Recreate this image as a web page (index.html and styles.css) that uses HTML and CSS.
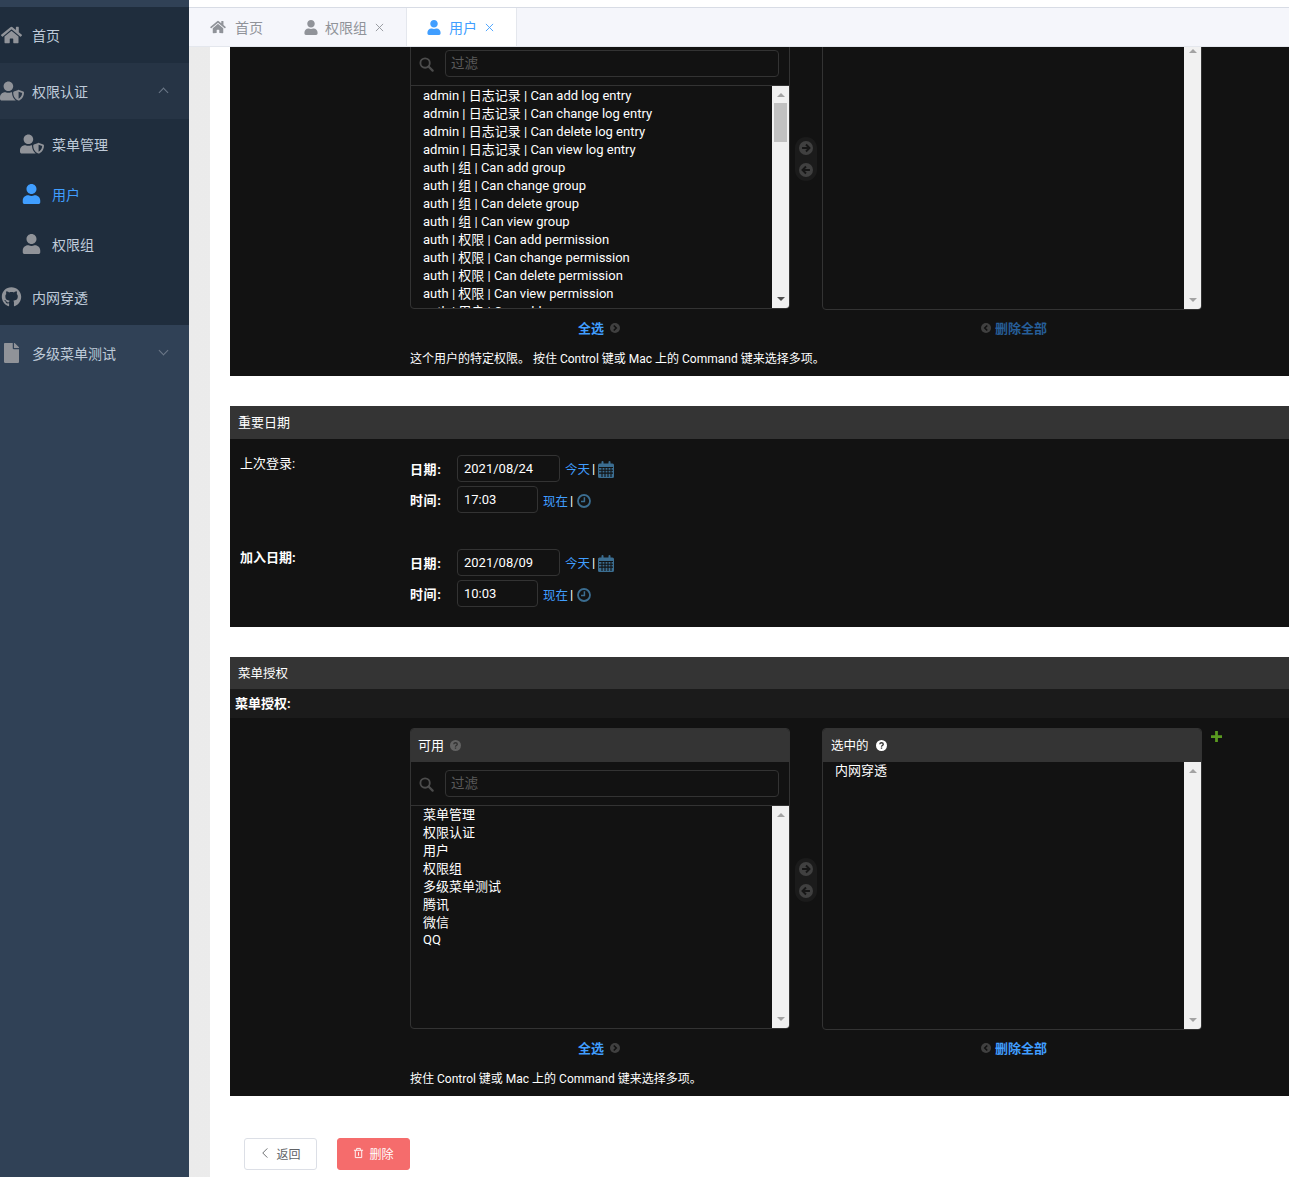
FILE: index.html
```html
<!DOCTYPE html>
<html lang="en">

<head>
    <title>用户</title>
    <meta charset="UTF-8">
    <meta name="viewport" content="width=device-width, initial-scale=1">
    <link rel="stylesheet" href="styles.css">
</head>

<body>
    <svg class="defs" aria-hidden="true">
        <symbol id="i-home" viewBox="0 0 576 512"><path d="M280.37 148.26L96 300.11V464a16 16 0 0 0 16 16l112.06-.29a16 16 0 0 0 15.92-16V368a16 16 0 0 1 16-16h64a16 16 0 0 1 16 16v95.64a16 16 0 0 0 16 16.05L464 480a16 16 0 0 0 16-16V300L295.67 148.26a12.19 12.19 0 0 0-15.3 0zM571.6 251.47L488 182.56V44.05a12 12 0 0 0-12-12h-56a12 12 0 0 0-12 12v72.61L318.47 43a48 48 0 0 0-61 0L4.34 251.47a12 12 0 0 0-1.6 16.9l25.5 31A12 12 0 0 0 45.15 301l235.22-193.74a12.19 12.19 0 0 1 15.3 0L530.9 301a12 12 0 0 0 16.9-1.6l25.5-31a12 12 0 0 0-1.7-16.93z"/></symbol>
        <symbol id="i-user" viewBox="0 0 448 512"><path d="M224 256c70.7 0 128-57.3 128-128S294.7 0 224 0 96 57.3 96 128s57.3 128 128 128zm89.6 32h-16.7c-22.2 10.2-46.9 16-72.9 16s-50.6-5.8-72.9-16h-16.7C60.2 288 0 348.2 0 422.4V464c0 26.5 21.5 48 48 48h352c26.5 0 48-21.5 48-48v-41.6c0-74.2-60.2-134.4-134.4-134.4z"/></symbol>
        <symbol id="i-shield" viewBox="0 0 640 512"><path d="M622.3 271.1l-115.2-45c-4.1-1.6-12.6-3.7-22.2 0l-115.2 45c-10.7 4.2-17.7 14-17.7 24.9 0 111.6 68.7 188.8 132.9 213.9 9.6 3.7 18 1.6 22.2 0C558.4 489.9 640 420.5 640 296c0-10.9-7-20.7-17.7-24.9zM496 462.4V273.3l95.5 37.3c-5.6 87.1-60.9 135.4-95.5 151.8zM224 256c70.7 0 128-57.3 128-128S294.7 0 224 0 96 57.3 96 128s57.3 128 128 128zm96 40c0-2.5.8-4.8 1.1-7.2-2.5-.1-4.9-.8-7.5-.8h-16.7c-22.2 10.2-46.9 16-72.9 16s-50.6-5.8-72.9-16h-16.7C60.2 288 0 348.2 0 422.4V464c0 26.5 21.5 48 48 48h352c6.8 0 13.3-1.5 19.2-4-54-42.9-99.2-116.7-99.2-212z"/></symbol>
        <symbol id="i-github" viewBox="0 0 496 512"><path d="M165.9 397.4c0 2-2.3 3.6-5.2 3.6-3.3 0-5.6-1.6-5.6-3.6 0-2 2.3-3.6 5.2-3.6 3-.3 5.6 1.3 5.6 3.6zm-31.1-4.5c-.7 2 1.3 4.3 4.3 4.9 2.6 1 5.6 0 6.2-2s-1.3-4.3-4.3-5.2c-2.6-.7-5.5.3-6.2 2.3zm44.2-1.7c-2.9.7-4.9 2.6-4.6 4.9.3 2 2.9 3.3 5.9 2.6 2.9-.7 4.9-2.6 4.6-4.6-.3-1.9-3-3.2-5.9-2.9zM244.8 8C106.1 8 0 113.3 0 252c0 110.9 69.8 205.8 169.5 239.2 12.8 2.3 17.3-5.6 17.3-12.1 0-6.2-.3-40.4-.3-61.4 0 0-70 15-84.7-29.8 0 0-11.4-29.1-27.8-36.6 0 0-22.9-15.7 1.6-15.4 0 0 24.9 2 38.6 25.8 21.9 38.6 58.6 27.5 72.9 20.9 2.3-16 8.8-27.1 16-33.7-55.9-6.2-112.3-14.3-112.3-110.5 0-27.5 7.6-41.3 23.6-58.9-2.6-6.5-11.1-33.3 2.6-67.9 20.9-6.5 69 27 69 27 20-5.6 41.5-8.5 62.8-8.5s42.8 2.9 62.8 8.5c0 0 48.1-33.6 69-27 13.7 34.7 5.2 61.4 2.6 67.9 16 17.7 25.8 31.5 25.8 58.9 0 96.5-58.9 104.2-114.8 110.5 9.2 7.9 17 22.9 17 46.4 0 33.7-.3 75.4-.3 83.6 0 6.5 4.6 14.4 17.3 12.1C428.2 457.8 496 362.9 496 252 496 113.3 383.5 8 244.8 8z"/></symbol>
        <symbol id="i-file" viewBox="0 0 384 512"><path d="M224 136V0H24C10.7 0 0 10.7 0 24v464c0 13.3 10.7 24 24 24h336c13.3 0 24-10.7 24-24V160H248c-13.2 0-24-10.8-24-24zm160-14.1v6.1H256V0h6.1c6.4 0 12.5 2.5 17 7l97.9 98c4.5 4.5 7 10.6 7 16.9z"/></symbol>
        <symbol id="i-search" viewBox="0 0 16 16"><circle cx="6.5" cy="6.5" r="5" fill="none" stroke="currentColor" stroke-width="2"/><path d="M10.2 10.2l4.3 4.3" stroke="currentColor" stroke-width="2.4" stroke-linecap="round"/></symbol>
        <symbol id="i-right" viewBox="0 0 16 16"><circle cx="8" cy="8" r="8" fill="currentColor"/><path d="M3.5 8h8M8 4l4 4-4 4" fill="none" stroke="#161616" stroke-width="2.2"/></symbol>
        <symbol id="i-left" viewBox="0 0 16 16"><circle cx="8" cy="8" r="8" fill="currentColor"/><path d="M12.5 8h-8M8 4L4 8l4 4" fill="none" stroke="#161616" stroke-width="2.2"/></symbol>
        <symbol id="i-more" viewBox="0 0 16 16"><circle cx="8" cy="8" r="8" fill="currentColor"/><path d="M6 4l4 4-4 4" fill="none" stroke="#121212" stroke-width="2.6"/></symbol>
        <symbol id="i-less" viewBox="0 0 16 16"><circle cx="8" cy="8" r="8" fill="currentColor"/><path d="M10 4L6 8l4 4" fill="none" stroke="#121212" stroke-width="2.6"/></symbol>
        <symbol id="i-help" viewBox="0 0 16 16"><circle cx="8" cy="8" r="8" fill="currentColor"/><path d="M5.4 6.2C5.6 4.6 6.7 4 8 4c1.500 0 2.600.9 2.600 2.200 0 1.900-2.600 1.800-2.600 3.500" fill="none" stroke="#333" stroke-width="1.900"/><path d="M7 10.800h2v2H7z" fill="#333"/></symbol>
        <symbol id="i-calendar" viewBox="0 0 16 17"><path fill="currentColor" d="M1.500 2.500H3.500V1a1 1 0 0 1 2 0v1.500h5V1a1 1 0 0 1 2 0v1.500h2a1.500 1.500 0 0 1 1.500 1.500v11.500a1.500 1.500 0 0 1-1.500 1.500h-13A1.500 1.500 0 0 1 0 15.500V4a1.500 1.500 0 0 1 1.500-1.500z"/><path stroke="#121212" stroke-width="1.100" fill="none" d="M1 6.500h14M1 9.300h14M1 12.100h14M4 6.500v9.500M7 6.500v9.500M10 6.500v9.500M13 6.500v9.500"/></symbol>
        <symbol id="i-clock" viewBox="0 0 14 14"><circle cx="7" cy="7" r="6" fill="none" stroke="currentColor" stroke-width="1.800"/><path d="M7.400 3.200v4.200H4" fill="none" stroke="currentColor" stroke-width="1.500"/></symbol>
    </svg>

    <div class="app">
        <aside class="sidebar">
            <nav class="menu">
                <a class="menu-item"><svg class="menu-icon"><use href="#i-home"/></svg>首页</a>
                <a class="menu-item menu-open"><svg class="menu-icon menu-icon-wide"><use href="#i-shield"/></svg>权限认证<span class="chevron chevron-up"></span></a>
                <a class="menu-item menu-sub"><svg class="menu-icon menu-icon-wide"><use href="#i-shield"/></svg>菜单管理</a>
                <a class="menu-item menu-sub menu-active"><svg class="menu-icon"><use href="#i-user"/></svg>用户</a>
                <a class="menu-item menu-sub"><svg class="menu-icon"><use href="#i-user"/></svg>权限组</a>
                <a class="menu-item"><svg class="menu-icon"><use href="#i-github"/></svg>内网穿透</a>
                <a class="menu-item menu-plain"><svg class="menu-icon"><use href="#i-file"/></svg>多级菜单测试<span class="chevron"></span></a>
            </nav>
        </aside>

        <main class="main">
            <div class="top-line"></div>
            <div class="tabs">
                <a class="tab"><svg class="tab-icon"><use href="#i-home"/></svg>首页</a>
                <a class="tab tab-closable"><svg class="tab-icon tab-icon-user"><use href="#i-user"/></svg>权限组<svg class="tab-close" viewBox="0 0 10 10"><path d="M1 1l8 8M9 1l-8 8"/></svg></a>
                <a class="tab tab-closable tab-active"><svg class="tab-icon tab-icon-user"><use href="#i-user"/></svg>用户<svg class="tab-close" viewBox="0 0 10 10"><path d="M1 1l8 8M9 1l-8 8"/></svg></a>
            </div>

            <div class="content">
                <div class="page">
                    <section class="panel panel-scrolled">
                        <div class="chooser">
                            <div class="box box-left">
                                <div class="box-title"></div>
                                <div class="filter">
                                    <svg class="filter-icon"><use href="#i-search"/></svg>
                                    <input class="filter-input" type="text" placeholder="过滤">
                                </div>
                                <div class="list">
                                    <div class="list-rows">
                                        <div>admin | 日志记录 | Can add log entry</div>
                                        <div>admin | 日志记录 | Can change log entry</div>
                                        <div>admin | 日志记录 | Can delete log entry</div>
                                        <div>admin | 日志记录 | Can view log entry</div>
                                        <div>auth | 组 | Can add group</div>
                                        <div>auth | 组 | Can change group</div>
                                        <div>auth | 组 | Can delete group</div>
                                        <div>auth | 组 | Can view group</div>
                                        <div>auth | 权限 | Can add permission</div>
                                        <div>auth | 权限 | Can change permission</div>
                                        <div>auth | 权限 | Can delete permission</div>
                                        <div>auth | 权限 | Can view permission</div>
                                        <div>auth | 用户 | Can add user</div>
                                    </div>
                                    <div class="scrollbar"><span class="arrow-up"></span><span class="thumb"></span><span class="arrow-down arrow-dark"></span></div>
                                </div>
                            </div>
                            <div class="mover">
                                <svg class="mover-icon"><use href="#i-right"/></svg>
                                <svg class="mover-icon"><use href="#i-left"/></svg>
                            </div>
                            <div class="box box-right">
                                <div class="box-title"></div>
                                <div class="list">
                                    <div class="list-rows"></div>
                                    <div class="scrollbar"><span class="arrow-up"></span><span class="arrow-down"></span></div>
                                </div>
                            </div>
                        </div>
                        <div class="actions">
                            <div class="action"><a class="action-link">全选</a><svg class="action-icon"><use href="#i-more"/></svg></div>
                            <div class="action action-dim"><svg class="action-icon"><use href="#i-less"/></svg><a class="action-link">删除全部</a></div>
                        </div>
                        <p class="help">这个用户的特定权限。 按住 Control 键或 Mac 上的 Command 键来选择多项。</p>
                    </section>

                    <h2 class="panel-head">重要日期</h2>
                    <section class="panel date-panel">
                        <div class="date-group">
                            <div class="date-title">上次登录:</div>
                            <div class="date-fields">
                                <div class="date-row">
                                    <label class="date-label">日期:</label>
                                    <input class="date-input" type="text" value="2021/08/24">
                                    <a class="date-link">今天</a><span class="date-sep">|</span><svg class="calendar"><use href="#i-calendar"/></svg>
                                </div>
                                <div class="date-row">
                                    <label class="date-label">时间:</label>
                                    <input class="date-input time-input" type="text" value="17:03">
                                    <a class="date-link date-link-low">现在</a><span class="date-sep date-link-low">|</span><svg class="clock"><use href="#i-clock"/></svg>
                                </div>
                            </div>
                        </div>
                        <div class="date-group">
                            <div class="date-title date-strong">加入日期:</div>
                            <div class="date-fields">
                                <div class="date-row">
                                    <label class="date-label">日期:</label>
                                    <input class="date-input" type="text" value="2021/08/09">
                                    <a class="date-link">今天</a><span class="date-sep">|</span><svg class="calendar"><use href="#i-calendar"/></svg>
                                </div>
                                <div class="date-row">
                                    <label class="date-label">时间:</label>
                                    <input class="date-input time-input" type="text" value="10:03">
                                    <a class="date-link date-link-low">现在</a><span class="date-sep date-link-low">|</span><svg class="clock"><use href="#i-clock"/></svg>
                                </div>
                            </div>
                        </div>
                    </section>

                    <h2 class="panel-head panel-head-low">菜单授权</h2>
                    <div class="field-head">菜单授权:</div>
                    <section class="panel panel-menu">
                        <div class="chooser">
                            <div class="box box-left">
                                <div class="box-title">可用 <svg class="help-icon"><use href="#i-help"/></svg></div>
                                <div class="filter">
                                    <svg class="filter-icon"><use href="#i-search"/></svg>
                                    <input class="filter-input" type="text" placeholder="过滤">
                                </div>
                                <div class="list">
                                    <div class="list-rows list-rows-top">
                                        <div>菜单管理</div>
                                        <div>权限认证</div>
                                        <div>用户</div>
                                        <div>权限组</div>
                                        <div>多级菜单测试</div>
                                        <div>腾讯</div>
                                        <div>微信</div>
                                        <div class="row-latin">QQ</div>
                                    </div>
                                    <div class="scrollbar"><span class="arrow-up"></span><span class="arrow-down"></span></div>
                                </div>
                            </div>
                            <div class="mover">
                                <svg class="mover-icon"><use href="#i-right"/></svg>
                                <svg class="mover-icon"><use href="#i-left"/></svg>
                            </div>
                            <div class="box box-right">
                                <div class="box-title">选中的 <svg class="help-icon help-on"><use href="#i-help"/></svg></div>
                                <div class="list">
                                    <div class="list-rows">
                                        <div>内网穿透</div>
                                    </div>
                                    <div class="scrollbar"><span class="arrow-up"></span><span class="arrow-down"></span></div>
                                </div>
                            </div>
                            <svg class="add-icon" viewBox="0 0 12 12"><path d="M4.500 0h3v4.500H12v3H7.500V12h-3V7.500H0v-3h4.500z"/></svg>
                        </div>
                        <div class="actions">
                            <div class="action"><a class="action-link">全选</a><svg class="action-icon"><use href="#i-more"/></svg></div>
                            <div class="action"><svg class="action-icon"><use href="#i-less"/></svg><a class="action-link">删除全部</a></div>
                        </div>
                        <p class="help">按住 Control 键或 Mac 上的 Command 键来选择多项。</p>
                    </section>

                    <div class="buttons">
                        <button class="btn" type="button"><svg class="btn-icon" viewBox="0 0 12 12"><path d="M8 1L3 6l5 5"/></svg>返回</button>
                        <button class="btn btn-danger" type="button"><svg class="btn-icon" viewBox="0 0 12 12"><path d="M1 3h10M4 3V1h4v2M2.500 3v8h7V3M6 5v4"/></svg>删除</button>
                    </div>
                </div>
            </div>
        </main>
    </div>
</body>

</html>
```

FILE: styles.css
```css
* {
    margin: 0;
    padding: 0;
    box-sizing: border-box;
}

html,
body {
    height: 100%;
    overflow: hidden;
}

body {
    font-family: Roboto, "Noto Sans CJK SC", sans-serif;
    font-size: 13px;
    background: #fff;
}

.defs {
    display: none;
}

svg {
    fill: currentColor;
}

.app {
    display: flex;
    height: 1177px;
}

/* sidebar */
.sidebar {
    width: 189px;
    flex: none;
    background: #304156;
    padding-top: 7px;
}

.menu-item {
    position: relative;
    display: flex;
    align-items: center;
    height: 56px;
    font-size: 14px;
    color: #bfcbd9;
    background: #1f2d3d;
}

.menu-icon {
    width: 32px;
    height: 20px;
    padding: 0 10px 0 1px;
    flex: none;
    color: #909399;
}

.menu-icon-wide {
    padding: 0 8px 0 0;
}

.menu-open {
    background: #263445;
}

.menu-plain {
    background: #304156;
}

.menu-sub {
    height: 50px;
    padding-left: 20px;
}

.menu-active {
    color: #409eff;
}

.menu-active .menu-icon {
    color: #409eff;
}

.chevron {
    position: absolute;
    top: 22px;
    left: 160px;
    width: 7px;
    height: 7px;
    border-right: 1px solid #6c7888;
    border-bottom: 1px solid #6c7888;
    transform: rotate(45deg);
}

.chevron-up {
    top: 26px;
    transform: rotate(225deg);
}

/* tabs */
.main {
    flex: 1;
    min-width: 0;
    display: flex;
    flex-direction: column;
}

.top-line {
    height: 8px;
    flex: none;
    border-bottom: 1px solid #d8dce5;
}

.tabs {
    height: 39px;
    flex: none;
    display: flex;
    background: #f5f6fb;
    border-bottom: 1px solid #e4e7ed;
}

.tab {
    display: flex;
    align-items: center;
    padding: 0 20px 0 21px;
    font-size: 14px;
    color: #909399;
}

.tab-icon {
    width: 16px;
    height: 14px;
    margin-right: 9px;
}

.tab-icon-user {
    width: 14px;
    height: 15px;
    margin-right: 7px;
}

.tab-close {
    width: 9px;
    height: 9px;
    margin-left: 8px;
    fill: none;
    stroke: currentColor;
    stroke-width: 1;
}

.tab-closable {
    padding-right: 22px;
}

.tab-active {
    height: 38px;
    padding-left: 20px;
    color: #409eff;
    background: #fff;
    border-left: 1px solid #e4e7ed;
    border-right: 1px solid #e4e7ed;
}

.tab-active .tab-icon-user {
    margin-right: 8px;
}

/* page */
.content {
    flex: 1;
    min-height: 0;
    overflow: hidden;
    padding-left: 21px;
    background: linear-gradient(to right, #ebebeb, #f7f7f7);
}

.page {
    height: 100%;
    padding-left: 20px;
    background: #fff;
}

.panel {
    background: #121212;
    color: #fff;
    overflow: hidden;
}

.panel-scrolled {
    height: 329px;
}

.panel-scrolled .chooser {
    margin-top: -39px;
}

.panel-head {
    margin-top: 30px;
    height: 33px;
    padding-left: 8px;
    line-height: 33px;
    font-size: 13px;
    font-weight: 400;
    color: #fff;
    background: #343434;
}

.panel-head-low {
    height: 32px;
    padding-top: 1px;
    line-height: 32px;
    font-size: 12.5px;
}

.field-head {
    height: 29px;
    padding-left: 5px;
    line-height: 30px;
    font-weight: 700;
    color: #fff;
    background: #1b1b1b;
}

.panel-menu {
    padding-top: 10px;
}

.panel-menu .mover {
    margin-top: 2px;
}

/* selector boxes */
.chooser {
    display: flex;
    align-items: flex-start;
    margin-left: 180px;
}

.box {
    width: 380px;
    flex: none;
    border: 1px solid #333;
    border-radius: 4px;
    overflow: hidden;
}

.box-title {
    display: flex;
    align-items: center;
    height: 33px;
    margin: 0 -1px;
    padding: 0 0 2px 8px;
    gap: 6px;
    background: #343434;
}

.box-right .box-title {
    padding-left: 9px;
    gap: 7px;
    font-size: 12.5px;
}

.help-icon {
    width: 11px;
    height: 11px;
    margin-top: 1px;
    color: #626262;
}

.help-on {
    color: #fff;
}

.filter {
    display: flex;
    align-items: center;
    height: 44px;
    padding: 0 10px 1px 8px;
    border-bottom: 1px solid #333;
}

.filter-icon {
    width: 15px;
    height: 15px;
    margin: 3px 11px 0 0;
    flex: none;
    color: #4c4c4c;
}

.filter-input {
    flex: 1;
    height: 27px;
    padding: 0 5px;
    font: 13.5px Roboto, "Noto Sans CJK SC", sans-serif;
    color: #fff;
    background: #121212;
    border: 1px solid #333;
    border-radius: 4px;
}

.filter-input::placeholder {
    color: #5a5a5a;
}

.list {
    display: flex;
    height: 222px;
    overflow: hidden;
}

.box-right .list {
    height: 267px;
}

.list-rows {
    flex: 1;
    padding: 1px 0 0 12px;
    line-height: 18px;
}

.list-rows-top,
.box-right .list-rows {
    padding-top: 0;
}

.row-latin {
    line-height: 15px;
}

.scrollbar {
    position: relative;
    width: 17px;
    flex: none;
    background: #f1f1f1;
}

.thumb {
    position: absolute;
    top: 17px;
    left: 2px;
    width: 13px;
    height: 39px;
    background: #c1c1c1;
}

.arrow-up,
.arrow-down {
    position: absolute;
    left: 5px;
    border-left: 4px solid transparent;
    border-right: 4px solid transparent;
}

.arrow-up {
    top: 7px;
    border-bottom: 4px solid #a3a3a3;
}

.arrow-down {
    bottom: 7px;
    border-top: 4px solid #a3a3a3;
}

.arrow-dark {
    border-top-color: #505050;
}

.mover {
    align-self: center;
    display: flex;
    flex-direction: column;
    align-items: center;
    gap: 8px;
    width: 22px;
    height: 44px;
    margin: 0 5px;
    padding-top: 4px;
    flex: none;
    background: #1b1b1b;
    border-radius: 11px;
}

.mover-icon {
    width: 14px;
    height: 14px;
    flex: none;
    color: #404040;
}

.add-icon {
    width: 11px;
    height: 11px;
    margin: 3px 0 0 9px;
    flex: none;
    color: #5a9a20;
}

.actions {
    display: flex;
    gap: 32px;
    margin: -1px 0 0 180px;
}

.action {
    display: flex;
    align-items: center;
    justify-content: center;
    width: 380px;
    height: 38px;
    padding: 0 2px 2px 0;
    gap: 6px;
    color: #404040;
}

.action + .action {
    gap: 4px;
    padding: 0 0 2px 4px;
}

.action-link {
    font-weight: 700;
    color: #409eff;
}

.action-dim .action-link {
    color: #265e98;
}

.action-icon {
    width: 10px;
    height: 10px;
    margin-top: 2px;
}

.help {
    height: 29px;
    margin-left: 180px;
    padding-top: 3px;
    line-height: 18px;
    font-size: 12px;
}

/* dates */
.date-panel {
    height: 188px;
    padding: 16px 0 0 10px;
}

.date-group {
    display: flex;
    margin-bottom: 32px;
}

.date-title {
    width: 170px;
    line-height: 18px;
}

.date-strong,
.date-label {
    font-weight: 700;
}

.date-row {
    display: flex;
    align-items: center;
    height: 27px;
    margin-bottom: 4px;
}

.date-label {
    width: 47px;
    letter-spacing: .6px;
}

.date-input {
    width: 103px;
    height: 27px;
    padding: 0 6px;
    font: 13px Roboto, "Noto Sans CJK SC", sans-serif;
    color: #fff;
    background: #121212;
    border: 1px solid #333;
    border-radius: 4px;
}

.time-input {
    width: 81px;
}

.date-link {
    margin-left: 5px;
    font-size: 12.5px;
    color: #409eff;
}

.date-link-low {
    padding-top: 2px;
}

.date-sep {
    margin: 0 3px 0 2px;
}

.calendar {
    width: 16px;
    height: 17px;
    margin-top: 2px;
    color: #3b6d90;
}

.clock {
    width: 14px;
    height: 14px;
    margin: 3px 0 0 1px;
    color: #3b6d90;
}

/* buttons */
.buttons {
    display: flex;
    gap: 20px;
    padding: 42px 0 0 14px;
}

.btn {
    display: flex;
    align-items: center;
    justify-content: center;
    width: 73px;
    height: 32px;
    padding-bottom: 2px;
    font: 12px Roboto, "Noto Sans CJK SC", sans-serif;
    color: #606266;
    background: #fff;
    border: 1px solid #dcdfe6;
    border-radius: 3px;
}

.btn-icon {
    width: 11px;
    height: 12px;
    margin-right: 5px;
    fill: none;
    stroke: currentColor;
    stroke-width: 1;
}

.btn-danger {
    color: #fff;
    background: #f56c6c;
    border-color: #f56c6c;
}
```
